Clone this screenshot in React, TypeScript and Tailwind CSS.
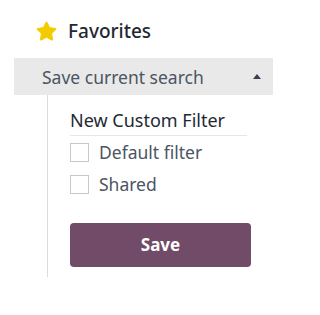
import { Star } from "lucide-react";

export default function App() {
  return (
    <div
      className="w-[289px] h-[315px] bg-white pt-[19px]"
      style={{ fontFamily: '"Noto Sans", "Open Sans", sans-serif' }}
    >
      <div className="flex items-center h-[25px] pl-[35px] gap-[10px]">
        <Star className="w-[23px] h-[23px] text-[#f3cc00]" fill="#f3cc00" strokeWidth={1} />
        <span className="text-[19px] font-medium text-[#1f2933] leading-none">Favorites</span>
      </div>

      <div className="mt-[14px] ml-[14px] w-[259px] h-[37px] bg-[#e9e9e9] flex items-center justify-between pl-[28px] pr-[12px]">
        <span className="text-[17.5px] leading-[22px] text-[#4b5563]">Save current search</span>
        <span className="w-0 h-0 border-l-[4.5px] border-r-[4.5px] border-b-[5px] border-l-transparent border-r-transparent border-b-[#374151]" />
      </div>

      <div className="ml-[47px] border-l border-[#dcdcdc] pl-[22px] pt-[14px] pb-[10px]">
        <div className="w-[177px] border-b border-[#e5e7eb] pb-[4px] text-[18px] text-[#1f2933] leading-[22px]">
          New Custom Filter
        </div>
        <div className="flex flex-col gap-[12px] mt-[6px]">
          <label className="flex items-center gap-[10px] h-[20px]">
            <span className="w-[19px] h-[19px] border border-[#c8c8c8] bg-white" />
            <span className="text-[17.5px] leading-[22px] text-[#4b5563]">Default filter</span>
          </label>
          <label className="flex items-center gap-[10px] h-[20px]">
            <span className="w-[19px] h-[19px] border border-[#c8c8c8] bg-white" />
            <span className="text-[17.5px] leading-[22px] text-[#4b5563]">Shared</span>
          </label>
        </div>
        <button className="mt-[29px] w-[181px] h-[44px] rounded-[4px] bg-[#714b67] text-white text-[17px] font-bold">
          Save
        </button>
      </div>
    </div>
  );
}
